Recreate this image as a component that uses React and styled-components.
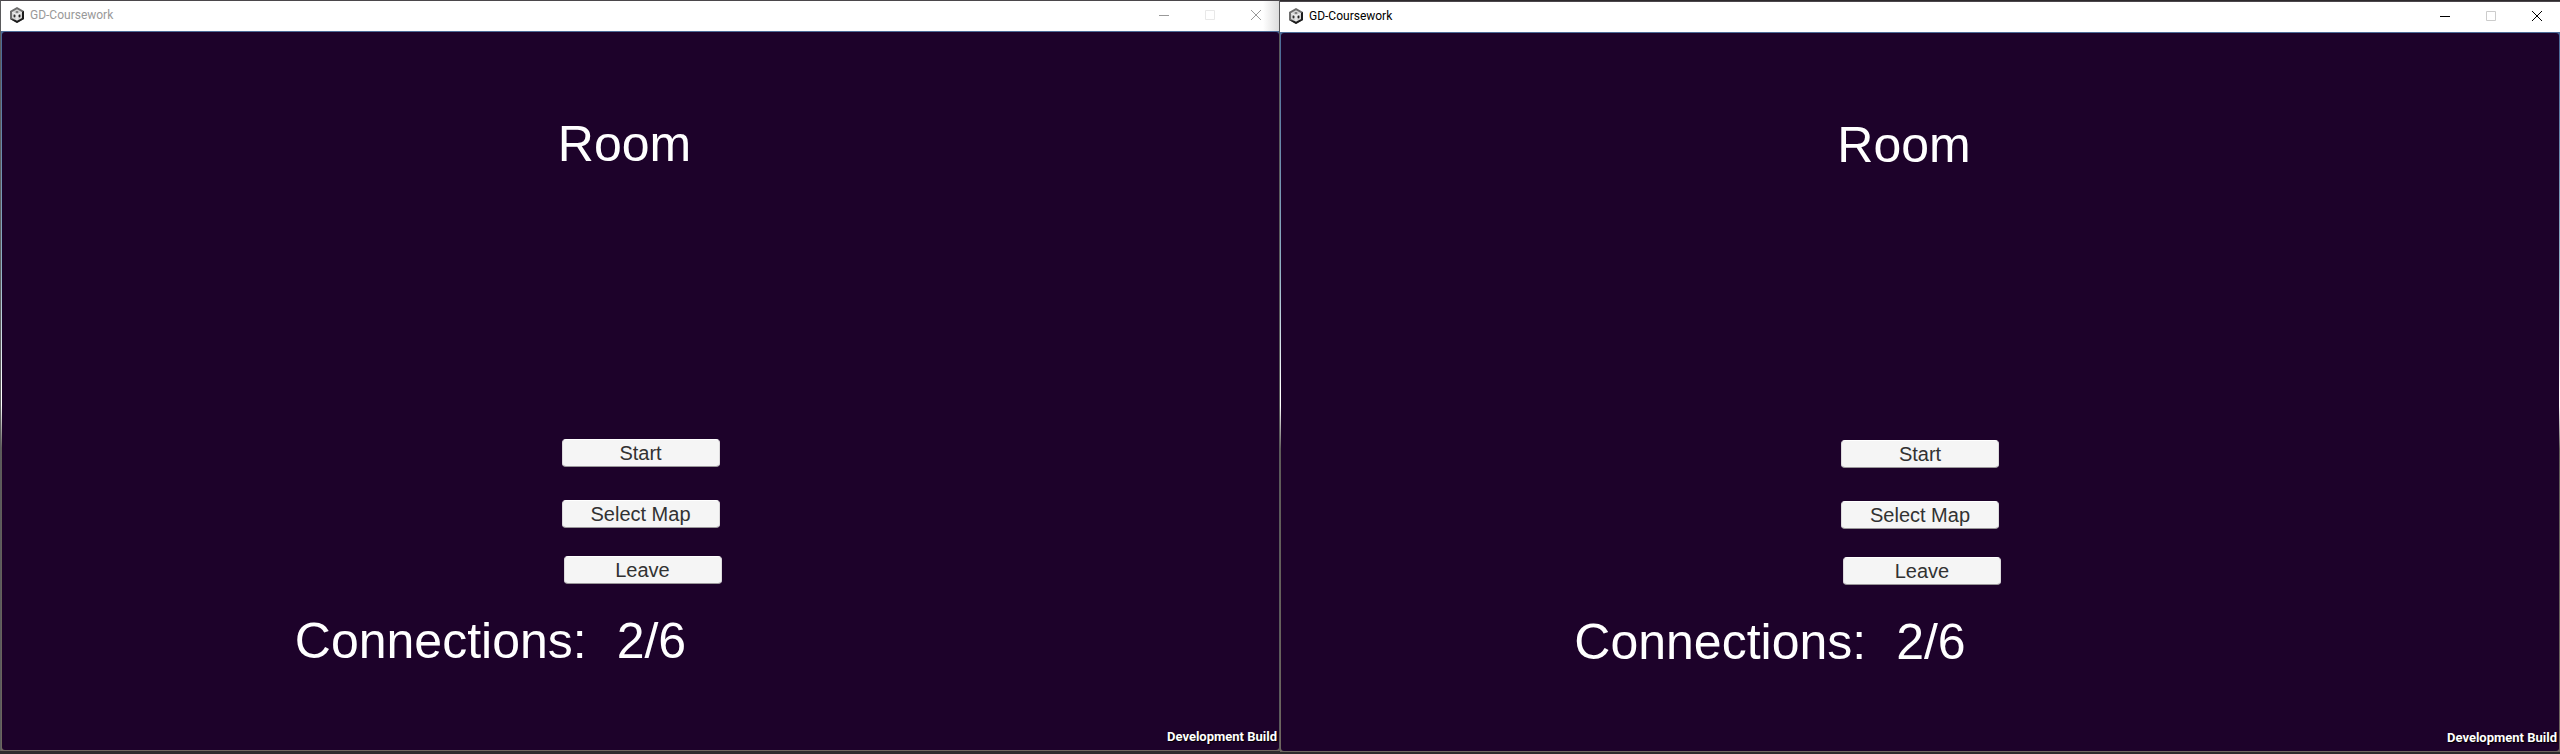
import React from "react";
import styled, { createGlobalStyle } from "styled-components";

const GlobalStyle = createGlobalStyle`
  * { box-sizing: border-box; }
  body { margin: 0; background: #2d2a2c; }
`;

const Desktop = styled.main`
  display: grid;
  grid-template-columns: 1fr 1fr;
  min-height: 100vh;
  padding-bottom: 2px;
  font-family: "Liberation Sans", Arial, sans-serif;
`;

const Window = styled.section`
  display: flex;
  flex-direction: column;
  border: 1px solid #5a5a5c;
  border-top-color: #4b474b;
  border-bottom-color: #6e665f;
  border-left-width: ${(p) => (p.$active ? 0 : 1)}px;
  border-right-width: ${(p) => (p.$active ? 0 : 1)}px;
  margin: ${(p) => (p.$active ? "1px 0 0" : "0 0 1px")};
`;

const TitleBar = styled.header`
  display: flex;
  align-items: center;
  height: 30px;
  padding: 0 0 2px 9px;
  background: ${(p) =>
    p.$active ? "#fff" : "linear-gradient(to left, #dcdcdc, #fff 16px)"};
  color: ${(p) => (p.$active ? "#000" : "#999")};
`;

const AppTitle = styled.span`
  flex: 1;
  margin-left: 6px;
  font: 12px/16px Roboto, "Open Sans", sans-serif;
`;

const Caption = styled.button`
  display: grid;
  place-items: center;
  width: 46px;
  height: 28px;
  padding: 0;
  border: 0;
  background: none;
  color: inherit;
`;

const CaptionIcon = styled.svg`
  display: block;
  width: 10px;
  height: 10px;
  fill: none;
  stroke: currentColor;
`;

const Frame = styled.div`
  flex: 1;
  display: flex;
  padding: 1px ${(p) => (p.$active ? 1 : 0)}px 0 1px;
  background: linear-gradient(
    #4d6c98,
    #4d6c98 4%,
    #8fb0c4 33%,
    #fff 50%,
    #fff 52%,
    #5f5b58 58%,
    #6e665f
  );
`;

const Scene = styled.div`
  flex: 1;
  display: flex;
  flex-direction: column;
  align-items: center;
  padding-top: 84px;
  border-radius: 3px;
  background: #1d022a;
  color: #fff;
`;

const Heading = styled.h1`
  margin: 0 32px 267px 0;
  font-size: 50px;
  line-height: 56px;
  font-weight: 400;
`;

const MenuButton = styled.button`
  width: 158px;
  height: 28px;
  margin: 0 0 ${(p) => p.$gap}px ${(p) => p.$indent || 0}px;
  padding: 0;
  border: 1px solid #dcdadc;
  border-top-color: #fff;
  border-bottom-color: #999699;
  border-radius: 4px;
  background: #f5f5f5;
  color: #323232;
  font: 20px/24px "Liberation Sans", Arial, sans-serif;
`;

const Connections = styled.p`
  display: flex;
  gap: 30px;
  margin: 29px 300px 0 0;
  font-size: 50px;
  line-height: 56px;
`;

const BuildLabel = styled.footer`
  align-self: flex-end;
  margin-top: auto;
  padding: 0 2px 4px 0;
  font: 700 13px/18px Roboto, sans-serif;
  text-shadow: 1px 1px 1px #000;
`;

function UnityIcon() {
  return (
    <svg width="14" height="16" viewBox="0 0 14 16" aria-hidden="true">
      <path d="M7 0 14 4v8l-7 4-7-4V4z" fill="#6d6d6d" />
      <path d="M14 4v8l-7 4-7-4 7 1 5-2V5z" fill="#1c1c1c" />
      <path d="M7 2.2 12 5v6l-5 2.8L2 11V5z" fill="#d4d4d4" />
      <path d="M7 8v5M7 8 2.500 5.500M7 8l4.500-2.500" stroke="#f6f6f6" />
      <ellipse cx="7" cy="5" rx="1.500" ry="1" fill="#777" />
      <ellipse cx="4.500" cy="9" rx="1" ry="1.400" fill="#333" />
      <ellipse cx="9.500" cy="9" rx="1" ry="1.400" fill="#222" />
    </svg>
  );
}

function GameWindow({ active }) {
  return (
    <Window $active={active}>
      <TitleBar $active={active}>
        <UnityIcon />
        <AppTitle>GD-Coursework</AppTitle>
        <Caption aria-label="Minimize">
          <CaptionIcon viewBox="0 0 10 10"><path d="M0 5.5h10" /></CaptionIcon>
        </Caption>
        <Caption aria-label="Maximize" disabled>
          <CaptionIcon viewBox="0 0 10 10">
            <path d="M.5.5h9v9h-9z" stroke={active ? "#ccc" : "#e8e8e8"} />
          </CaptionIcon>
        </Caption>
        <Caption aria-label="Close">
          <CaptionIcon viewBox="0 0 10 10"><path d="m0 0 10 10M10 0 0 10" /></CaptionIcon>
        </Caption>
      </TitleBar>
      <Frame $active={active}>
        <Scene>
          <Heading>Room</Heading>
          <MenuButton $gap={33}>Start</MenuButton>
          <MenuButton $gap={28}>Select Map</MenuButton>
          <MenuButton $gap={0} $indent={4}>Leave</MenuButton>
          <Connections>
            <span>Connections:</span>
            <span>2/6</span>
          </Connections>
          <BuildLabel>Development Build</BuildLabel>
        </Scene>
      </Frame>
    </Window>
  );
}

export default function App() {
  return (
    <>
      <GlobalStyle />
      <Desktop>
        <GameWindow />
        <GameWindow active />
      </Desktop>
    </>
  );
}
